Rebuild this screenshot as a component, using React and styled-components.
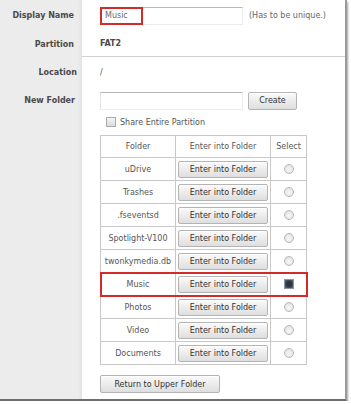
import React from "react";
import styled, { createGlobalStyle } from "styled-components";

const Global = createGlobalStyle`
  html, body { margin: 0; padding: 0; background: #fff; }
  body { font-family: "DejaVu Sans", "Liberation Sans", sans-serif; font-size: 8px; color: #555; }
`;

const Panel = styled.div`
  width: 345px;
  height: 399px;
  display: flex;
  flex-direction: column;
  background: #fff;
  border-right: 2px solid #9a9a9a;
  border-bottom: 2px solid #6e6e6e;
  box-shadow: 1px 2px 2px rgba(0,0,0,0.35);
`;

const Row = styled.div`
  display: flex;
  height: ${(p) => p.$h}px;
  flex: ${(p) => (p.$grow ? 1 : "none")};
`;

const Label = styled.div`
  width: 82px;
  flex: none;
  background: linear-gradient(to right, #ececec 0, #ececec 78px, #e2e2e2 82px);
  box-sizing: border-box;
  padding-right: ${(p) => p.$pr ?? 8}px;
  padding-top: ${(p) => p.$pt ?? 0}px;
  display: flex;
  justify-content: flex-end;
  align-items: ${(p) => (p.$top ? "flex-start" : "center")};
  font-weight: bold;
  color: #4a4a4a;
  font-size: 8px;
  white-space: nowrap;
`;

const Value = styled.div`
  flex: 1;
  display: flex;
  flex-direction: ${(p) => (p.$col ? "column" : "row")};
  align-items: ${(p) => (p.$col ? "flex-start" : "center")};
  padding-left: 18px;
  padding-top: ${(p) => p.$pt ?? 0}px;
  gap: ${(p) => p.$gap ?? 5}px;
  border-bottom: ${(p) => (p.$line ? "1px solid #d0d0d0" : "none")};
  color: #555;
`;

const InputWrap = styled.div`
  position: relative;
  width: 143px;
  height: 18px;
  box-sizing: border-box;
  border-top: 1px solid #b8b8b8;
  border-left: 1px solid #e2e2e2;
  border-bottom: 1px solid #ececec;
  border-right: 1px solid #ececec;
  display: flex;
  align-items: center;
  padding-left: 4px;
  color: #6a6a6a;
`;

const RedBox = styled.div`
  position: absolute;
  left: -1px;
  top: -1px;
  width: 43px;
  height: 18px;
  border: 2px solid #d42a2a;
  box-sizing: border-box;
`;

const Hint = styled.span`
  color: #666;
  margin-left: 1px;
`;

const Strong = styled.span`
  font-weight: bold;
  color: #4a4a4a;
`;

const Button = styled.button`
  font-family: inherit;
  font-size: 8px;
  color: #333;
  height: ${(p) => p.$h ?? 17}px;
  width: ${(p) => p.$w}px;
  padding: 0;
  border: 1px solid #b4b4b4;
  border-radius: 2px;
  background: linear-gradient(#fafafa, #dedede);
  box-shadow: inset 0 1px 0 #fff;
`;

const CheckBox = styled.span`
  display: inline-block;
  width: 8px;
  height: 8px;
  border: 1px solid #aaa;
  background: linear-gradient(#f4f4f4, #dcdcdc);
`;

const CheckLine = styled.label`
  display: flex;
  align-items: center;
  gap: 4px;
  padding-left: 6px;
  color: #555;
`;

const Table = styled.table`
  border-collapse: collapse;
  table-layout: fixed;
  width: 206px;
  margin-top: 4px;
  border: 1px solid #c4c4c4;
  td, th {
    border: 1px solid #c8c8c8;
    padding: 0;
    text-align: center;
    font-weight: normal;
    color: #555;
    white-space: nowrap;
    overflow: hidden;
  }
  th { height: 21px; }
  td { height: 22px; }
`;

const Tr = styled.tr`
  outline: ${(p) => (p.$hl ? "2px solid #d42a2a" : "none")};
  outline-offset: -1px;
`;

const Radio = styled.span`
  display: inline-block;
  width: 8px;
  height: 8px;
  border-radius: 50%;
  border: 1px solid #b8b8b8;
  background: radial-gradient(circle at 50% 60%, #f8f8f8 0, #dcdcdc 100%);
  vertical-align: middle;
`;

const Checked = styled.span`
  display: inline-block;
  width: 8px;
  height: 8px;
  border: 1px solid #8a95a6;
  background: radial-gradient(#2d3440 40%, #5d6a80 100%);
  vertical-align: middle;
`;

const folders = [
  "uDrive",
  "Trashes",
  ".fseventsd",
  "Spotlight-V100",
  "twonkymedia.db",
  "Music",
  "Photos",
  "Video",
  "Documents",
];

export default function App() {
  return (
    <>
      <Global />
      <Panel>
        <Row $h={31}>
          <Label>Display Name</Label>
          <Value $gap={5}>
            <InputWrap>
              Music
              <RedBox />
            </InputWrap>
            <Hint>(Has to be unique.)</Hint>
          </Value>
        </Row>
        <Row $h={26}>
          <Label>Partition</Label>
          <Value $line>
            <Strong>FAT2</Strong>
          </Value>
        </Row>
        <Row $h={31}>
          <Label $pr={5}>Location</Label>
          <Value>/</Value>
        </Row>
        <Row $h={25}>
          <Label $pr={7}>New Folder</Label>
          <Value $gap={5}>
            <InputWrap />
            <Button $w={49} $h={18}>Create</Button>
          </Value>
        </Row>
        <Row $h={18}>
          <Label />
          <Value>
            <CheckLine>
              <CheckBox />
              Share Entire Partition
            </CheckLine>
          </Value>
        </Row>
        <Row $grow>
          <Label />
          <Value $col $gap={10} $pt={0}>
            <Table>
              <colgroup>
                <col style={{ width: 75 }} />
                <col style={{ width: 95 }} />
                <col style={{ width: 36 }} />
              </colgroup>
              <thead>
                <tr>
                  <th>Folder</th>
                  <th>Enter into Folder</th>
                  <th>Select</th>
                </tr>
              </thead>
              <tbody>
                {folders.map((f) => (
                  <Tr key={f} $hl={f === "Music"}>
                    <td>{f}</td>
                    <td>
                      <Button $w={90}>Enter into Folder</Button>
                    </td>
                    <td>{f === "Music" ? <Checked /> : <Radio />}</td>
                  </Tr>
                ))}
              </tbody>
            </Table>
            <Button $w={120} $h={18}>Return to Upper Folder</Button>
          </Value>
        </Row>
      </Panel>
    </>
  );
}
